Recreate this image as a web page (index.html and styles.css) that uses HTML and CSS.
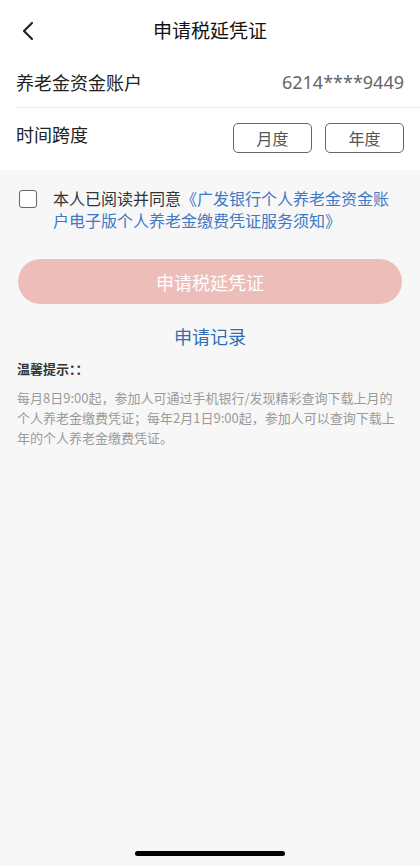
FILE: index.html
```html
<!DOCTYPE html>
<html lang="zh-CN">
<head>
  <meta charset="UTF-8" />
  <meta name="viewport" content="width=device-width, initial-scale=1.0" />
  <title>申请税延凭证</title>
  <link rel="stylesheet" href="styles.css">
</head>
<body>
  <div class="page">
    <header class="navbar">
      <a class="back" href="#">
        <svg width="14" height="20" viewBox="0 0 14 20"><path d="M11 2 L3 10 L11 18" fill="none" stroke="#222" stroke-width="2.2" stroke-linecap="round" stroke-linejoin="round"/></svg>
      </a>
      <div class="title">申请税延凭证</div>
    </header>

    <section class="card">
      <div class="row row-line">
        <span class="label">养老金资金账户</span>
        <span class="value">6214****9449</span>
      </div>
      <div class="row">
        <span class="label">时间跨度</span>
        <div class="spans">
          <button class="span-btn">月度</button>
          <button class="span-btn">年度</button>
        </div>
      </div>
    </section>

    <div class="agree">
      <span class="checkbox"></span>
      <p>本人已阅读并同意<a href="#">《广发银行个人养老金资金账户电子版个人养老金缴费凭证服务须知》</a></p>
    </div>

    <div class="actions">
      <button class="submit" disabled>申请税延凭证</button>
      <a class="records" href="#">申请记录</a>
    </div>

    <div class="tips">
      <h4>温馨提示：：</h4>
      <p>每月8日9:00起，参加人可通过手机银行/发现精彩查询下载上月的个人养老金缴费凭证；每年2月1日9:00起，参加人可以查询下载上年的个人养老金缴费凭证。</p>
    </div>

    <div class="home-bar"></div>
  </div>
</body>
</html>
```

FILE: styles.css
```css
* {
  box-sizing: border-box;
}
body {
  margin: 0;
  font-family: "Noto Sans CJK SC", "Liberation Sans", sans-serif;
  background: #f7f7f7;
  color: #222;
}
.page {
  min-height: 866px;
  display: flex;
  flex-direction: column;
}
.navbar {
  height: 60px;
  background: white;
  display: flex;
  align-items: center;
  justify-content: center;
  position: relative;
}
.back {
  position: absolute;
  left: 21px;
  top: 21px;
  display: block;
  line-height: 0;
}
.title {
  font-size: 19px;
  color: #111;
  margin-top: -2px;
}
.card {
  background: white;
  padding-left: 16px;
}
.row {
  display: flex;
  align-items: center;
  justify-content: space-between;
  padding-right: 16px;
}
.row-line {
  height: 48px;
  padding-bottom: 4px;
  border-bottom: 1px solid #ececec;
}
.row + .row {
  height: 62px;
  align-items: flex-start;
  padding-top: 13px;
}
.label {
  font-size: 18px;
  line-height: 26px;
  color: #222;
}
.value {
  font-family: "Noto Sans", "Liberation Sans", sans-serif;
  font-size: 18px;
  color: #666;
}
.spans {
  display: flex;
  gap: 13px;
  margin-top: 2px;
}
.span-btn {
  width: 79px;
  height: 30px;
  border: 1px solid #666;
  border-radius: 5px;
  background: white;
  font-family: inherit;
  font-size: 16px;
  color: #555;
  padding: 0;
}
.agree {
  display: flex;
  align-items: flex-start;
  padding: 17px 16px 0 19px;
}
.checkbox {
  flex: none;
  width: 18px;
  height: 18px;
  border: 1.5px solid #666;
  border-radius: 3px;
  margin-top: 3px;
  margin-right: 16px;
  background: white;
}
.agree p {
  margin: 0;
  font-size: 16px;
  line-height: 22px;
  color: #333;
}
.agree a {
  color: #3c79c6;
  text-decoration: none;
}
.actions {
  display: flex;
  flex-direction: column;
  align-items: center;
  padding: 0 18px;
  margin-top: 28px;
}
.submit {
  width: 100%;
  height: 45px;
  border: none;
  border-radius: 23px;
  background: #ecbdb9;
  color: white;
  font-family: inherit;
  font-size: 18px;
}
.records {
  margin-top: 18px;
  font-size: 18px;
  color: #2f6db4;
  text-decoration: none;
  line-height: 28px;
}
.tips {
  padding: 0 20px 0 17px;
  margin-top: 9px;
}
.tips h4 {
  margin: 0 0 10px;
  font-size: 13px;
  font-weight: bold;
  color: #333;
}
.tips p {
  margin: 0;
  font-size: 13px;
  line-height: 20px;
  color: #9a9a9a;
}
.home-bar {
  margin: auto auto 10px;
  width: 150px;
  height: 5px;
  border-radius: 3px;
  background: #000;
}
```
